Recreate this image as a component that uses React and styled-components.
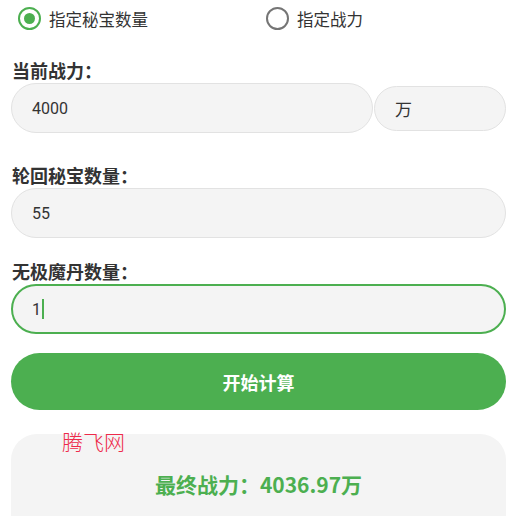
import React from "react";
import styled, { createGlobalStyle } from "styled-components";

const Global = createGlobalStyle`
  html, body { margin: 0; padding: 0; background: #ffffff; }
  body { font-family: Roboto, "Noto Sans CJK SC", sans-serif; color: #333333; }
  * { box-sizing: border-box; }
`;

const Page = styled.div`
  width: 508px;
  height: 516px;
  overflow: hidden;
  padding: 0 2px 0 11px;
  display: flex;
  flex-direction: column;
`;

const RadioRow = styled.div`
  height: 37px;
  flex-shrink: 0;
  display: flex;
  align-items: center;
  padding-left: 7px;
`;

const RadioOption = styled.label`
  width: ${(p) => p.$width || "auto"};
  display: flex;
  align-items: center;
  gap: 8px;
  font-size: 16.5px;
  color: #333333;
  font-family: "Noto Sans CJK SC", sans-serif;
`;

const RadioCircle = styled.span`
  width: 23px;
  height: 23px;
  border-radius: 50%;
  border: 2.5px solid ${(p) => (p.$checked ? "#4caf50" : "#757575")};
  display: flex;
  align-items: center;
  justify-content: center;
  flex-shrink: 0;
  &::after {
    content: "";
    width: 11px;
    height: 11px;
    border-radius: 50%;
    background: #4caf50;
    display: ${(p) => (p.$checked ? "block" : "none")};
  }
`;

const Section = styled.div`
  display: flex;
  flex-direction: column;
  flex-shrink: 0;
  margin-top: ${(p) => p.$top}px;
`;

const Label = styled.div`
  font-family: "Noto Sans CJK SC", sans-serif;
  font-size: 18px;
  font-weight: 700;
  line-height: 24px;
  color: #333333;
  padding-left: 1px;
  margin-bottom: 1px;
`;

const FieldRow = styled.div`
  display: flex;
  align-items: center;
  gap: 1px;
`;

const Field = styled.div`
  flex: 1 0 auto;
  height: ${(p) => p.$height || 50}px;
  border-radius: 25px;
  background: #f4f4f4;
  border: ${(p) => (p.$focused ? "2px solid #4caf50" : "1px solid #e2e2e2")};
  padding-left: ${(p) => (p.$focused ? 19 : 20)}px;
  display: flex;
  align-items: center;
  font-family: Roboto, "Noto Sans CJK SC", sans-serif;
  font-size: 16px;
  color: #333333;
`;

const UnitField = styled(Field)`
  flex: 0 0 132px;
  font-family: "Noto Sans CJK SC", sans-serif;
  font-size: 17px;
`;

const Caret = styled.span`
  display: inline-block;
  width: 2px;
  height: 20px;
  background: #4caf50;
  margin-left: 1px;
`;

const Button = styled.button`
  flex-shrink: 0;
  margin-top: 19px;
  height: 57px;
  border: none;
  border-radius: 29px;
  background: #4caf50;
  color: #ffffff;
  font-family: "Noto Sans CJK SC", sans-serif;
  font-size: 18px;
  font-weight: 700;
  display: flex;
  align-items: center;
  justify-content: center;
  padding: 0;
`;

const ResultCard = styled.div`
  position: relative;
  flex-shrink: 0;
  margin-top: 24px;
  height: 120px;
  border-radius: 26px;
  background: #f4f4f4;
  display: flex;
  justify-content: center;
  padding-top: 36px;
  font-family: "Noto Sans CJK SC", sans-serif;
  font-size: 21px;
  font-weight: 700;
  color: #4caf50;
  line-height: 28px;
`;

const Watermark = styled.span`
  position: absolute;
  left: 51px;
  top: -6px;
  font-family: "Noto Sans CJK SC", sans-serif;
  font-size: 21px;
  font-weight: 300;
  line-height: 26px;
  color: #ee2a4a;
`;

export default function App() {
  return (
    <>
      <Global />
      <Page>
        <RadioRow>
          <RadioOption $width="248px">
            <RadioCircle $checked />
            指定秘宝数量
          </RadioOption>
          <RadioOption>
            <RadioCircle />
            指定战力
          </RadioOption>
        </RadioRow>

        <Section $top={21}>
          <Label>当前战力：</Label>
          <FieldRow>
            <Field>4000</Field>
            <UnitField $height={45}>万</UnitField>
          </FieldRow>
        </Section>

        <Section $top={30}>
          <Label>轮回秘宝数量：</Label>
          <Field>55</Field>
        </Section>

        <Section $top={21}>
          <Label>无极魔丹数量：</Label>
          <Field $focused>
            1<Caret />
          </Field>
        </Section>

        <Button>开始计算</Button>

        <ResultCard>
          <Watermark>腾飞网</Watermark>
          最终战力：4036.97万
        </ResultCard>
      </Page>
    </>
  );
}
